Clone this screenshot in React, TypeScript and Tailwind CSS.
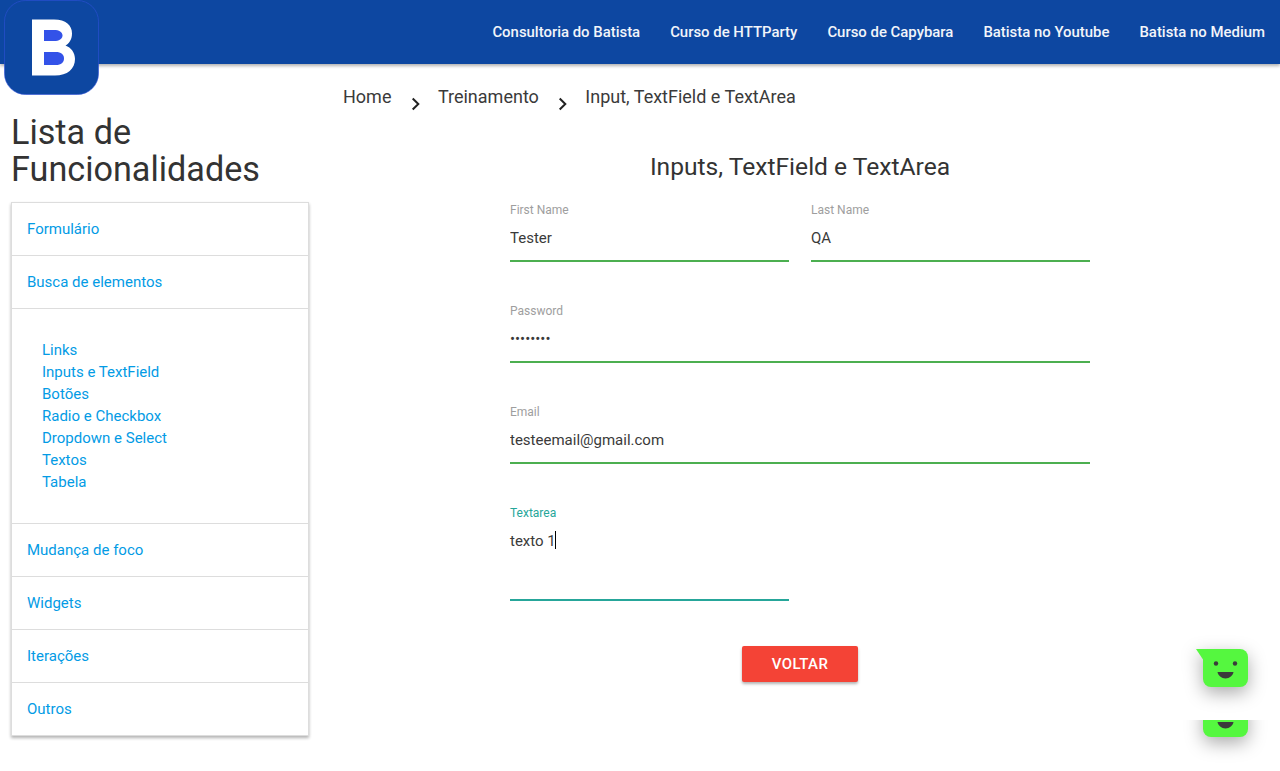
import React from "react";

const navLinks = ["Consultoria do Batista", "Curso de HTTParty", "Curso de Capybara", "Batista no Youtube", "Batista no Medium"];
const subLinks = ["Links", "Inputs e TextField", "Botões", "Radio e Checkbox", "Dropdown e Select", "Textos", "Tabela"];

function Logo() {
  return (
    <svg className="absolute left-[4px] top-0 z-20" width="95" height="95" viewBox="0 0 95 95">
      <rect x="0.5" y="0.5" width="94" height="94" rx="21" fill="#0d47a1" stroke="#2f50d8" strokeOpacity="0.6" />
      <path d="M28 19.5H50C62 19.5 68 25.5 68 33.5C68 39.5 65 43.5 61.500 45.500C67 47.500 71 52.500 71 59C71 69 63.500 75.500 51 75.500H28Z" fill="#fff" />
      <path d="M40 30H50C55 30 58.500 32 58.500 35.500C58.500 39 55 41 50 41H40Z" fill="#3352e8" />
      <path d="M40 52H52C57 52 60 54.500 60 58.500C60 62.500 57 65 52 65H40Z" fill="#3352e8" />
    </svg>
  );
}

function Bubble({ tail }: { tail: boolean }) {
  return (
    <svg width="52" height="50" viewBox="0 0 52 50" className="ml-[20px] block drop-shadow-[0_6px_9px_rgba(0,0,0,0.33)]">
      {tail && <path d="M16 12H0L8 24V24H16Z" fill="#55f73f" />}
      <rect x="7" y="12" width="45" height="38" rx="8" fill="#55f73f" />
      <circle cx="20" cy="26.500" r="2.200" fill="#3b3b3b" />
      <circle cx="39" cy="26.500" r="2.200" fill="#3b3b3b" />
      <path d="M21.500 35H37.500C37 38.500 33.500 41.500 29.500 41.500C25.500 41.500 22 38.500 21.500 35Z" fill="#3b3b3b" />
    </svg>
  );
}

function ChatWidget() {
  return (
    <div className="fixed left-[1176px] top-[637px] z-30 w-[104px]">
      <Bubble tail />
      <div className="mt-[33px] h-[51px] overflow-hidden bg-white">
        <div className="-mt-[33px]">
          <Bubble tail={false} />
        </div>
      </div>
    </div>
  );
}

function Field({ label, value, type = "text", className = "" }: { label: string; value: string; type?: string; className?: string }) {
  return (
    <div className={className}>
      <div className="h-[18px] text-[12px] leading-[18px] text-[#9e9e9e]">{label}</div>
      <input
        readOnly
        type={type}
        value={value}
        className="block h-[43px] w-full border-b-2 border-[#4caf50] bg-transparent pb-[3px] text-[15px] text-[#3a3a3a] outline-none"
      />
    </div>
  );
}

function SideItem({ label }: { label: string }) {
  return (
    <li className="flex h-[53px] items-center border-b border-[#dddddd] px-[15px] text-[15px] text-[#039be5] last:h-[52px] last:border-b-0">
      {label}
    </li>
  );
}

function Chevron({ className = "" }: { className?: string }) {
  return (
    <svg width="10" height="14" viewBox="0 0 10 14" className={className}>
      <path d="M1.700 1.500L7.300 7L1.700 12.500" fill="none" stroke="#222" strokeWidth="2" />
    </svg>
  );
}

export default function App() {
  return (
    <div className="relative h-[771px] overflow-hidden bg-white font-['Roboto',sans-serif] text-[#222]">
      <header className="relative z-10 flex h-16 items-center justify-end gap-[30px] bg-[#0d47a1] pr-[15px] shadow-[0_2px_3px_rgba(0,0,0,0.3)]">
        {navLinks.map((l) => (
          <a key={l} className="text-[14.920px] font-medium text-[#f2f5fa]">{l}</a>
        ))}
      </header>
      <Logo />
      <main className="flex">
        <aside className="w-[320px] shrink-0 px-3 pt-[50px]">
          <h4 className="-ml-px text-[34.200px] leading-[37px] text-[#333]">Lista de Funcionalidades</h4>
          <ul className="-ml-px mt-[14px] w-[298px] border border-[#dddddd] shadow-[0_2px_3px_rgba(0,0,0,0.3)]">
            <SideItem label="Formulário" />
            <SideItem label="Busca de elementos" />
            <li className="border-b border-[#dddddd] p-[30px] text-[15px] leading-[22px] text-[#039be5]">
              {subLinks.map((l) => (
                <div key={l}>{l}</div>
              ))}
            </li>
            <SideItem label="Mudança de foco" />
            <SideItem label="Widgets" />
            <SideItem label="Iterações" />
            <SideItem label="Outros" />
          </ul>
        </aside>
        <section className="flex-1">
          <nav className="flex h-[66px] items-start pl-[23px] pt-[20px] text-[18px] leading-[26px] text-[#3a3a3a]">
            <span>Home</span>
            <Chevron className="ml-[20px] mr-[16.500px] mt-[13px]" />
            <span>Treinamento</span>
            <Chevron className="ml-[19.500px] mr-[17px] mt-[13px]" />
            <span>Input, TextField e TextArea</span>
          </nav>
          <h5 className="mt-[20px] text-center text-[24.600px] leading-[34px] text-[#333]">Inputs, TextField e TextArea</h5>
          <form className="mx-auto mt-[17px] w-[580px]">
            <div className="grid grid-cols-2 gap-[22px]">
              <Field label="First Name" value="Tester" />
              <Field label="Last Name" value="QA" />
            </div>
            <Field className="mt-[40px]" label="Password" value="12345678" type="password" />
            <Field className="mt-[40px]" label="Email" value="testeemail@gmail.com" />
            <div className="mt-[40px] w-[279px]">
              <div className="h-[18px] text-[12px] leading-[18px] text-[#26a69a]">Textarea</div>
              <div className="h-[79px] border-b-2 border-[#26a69a] pt-[8px] text-[15px] leading-[22px] text-[#3a3a3a]">
                texto 1<span className="-ml-px inline-block h-[18px] w-px bg-black align-[-3px]" />
              </div>
            </div>
            <div className="mt-[45px] flex justify-center">
              <button type="button" className="h-9 w-[116px] rounded-[2px] bg-[#f44336] text-[15px] font-medium tracking-[0.4px] text-white shadow-[0_2px_3px_rgba(0,0,0,0.3)]">
                VOLTAR
              </button>
            </div>
          </form>
        </section>
      </main>
      <ChatWidget />
    </div>
  );
}
